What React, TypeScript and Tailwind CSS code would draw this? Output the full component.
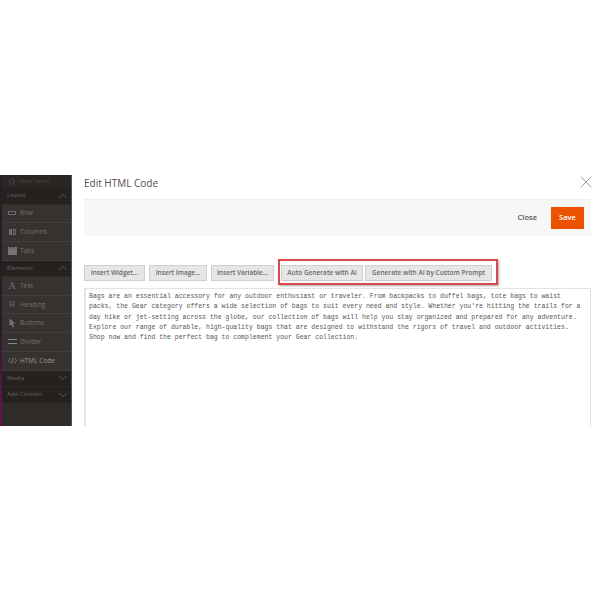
import { ChevronDown, ChevronUp, Search, X } from "lucide-react";
import type { ReactNode } from "react";

const openSans = "font-['Open_Sans','Noto_Sans',sans-serif]";

function SectionHeader({ label, open }: { label: string; open?: boolean }) {
  return (
    <div className="flex h-[16.5px] items-center justify-between border-b border-[#2e2a26] bg-[#25211e] pl-[5px] pr-px text-[6px] text-[#66625e]">
      <span>{label}</span>
      {open ? (
        <ChevronUp size={14} strokeWidth={1.3} className="text-[#6b6763]" />
      ) : (
        <ChevronDown size={14} strokeWidth={1.3} className="text-[#6b6763]" />
      )}
    </div>
  );
}

function SideItem({ icon, label, bright }: { icon: ReactNode; label: string; bright?: boolean }) {
  return (
    <div className="flex h-[18.7px] items-center border-b border-[#413e3b] bg-[#353230] pl-[5px]">
      <span className="flex w-[10px] justify-center text-[#6e6b68]">{icon}</span>
      <span className={`ml-[3px] text-[6.5px] ${bright ? "text-[#9a9794]" : "text-[#75716e]"}`}>{label}</span>
    </div>
  );
}

function ToolButton({ label, className }: { label: string; className: string }) {
  return (
    <button className={`h-[16px] rounded-none border border-[#cfcfcf] bg-[#e6e6e6] text-[6.5px] font-semibold text-[#666666] ${className}`}>
      {label}
    </button>
  );
}

export default function App() {
  return (
    <div className={`flex h-[600px] w-[600px] flex-col bg-white ${openSans}`}>
      <div className="h-[175px]" />
      <div className="flex h-[251px]">
        <div className="w-[2px] bg-gradient-to-b from-[#2a1a28] from-60% to-[#6a1050]" />
        <aside className="flex w-[70px] flex-col border-r border-[#55514e] bg-[#2e2b29]">
          <div className="flex h-[13px] items-center bg-[#2a2623] pl-[5px] text-[6px] text-[#4e4a47]">
            <span className="flex w-[10px] justify-center">
              <Search size={8} />
            </span>
            <span className="ml-[3px]">Find Items</span>
          </div>
          <SectionHeader label="Layout" open />
          <SideItem label="Row" icon={<span className="h-[4px] w-[8px] border border-[#6e6b68]" />} />
          <SideItem
            label="Columns"
            icon={
              <span className="flex h-[6px] w-[7px] gap-[1px]">
                <span className="w-[3px] bg-[#6e6b68]" />
                <span className="w-[3px] border border-[#6e6b68]" />
              </span>
            }
          />
          <SideItem
            label="Tabs"
            icon={
              <svg width="9" height="8" viewBox="0 0 9 8" fill="#75726f">
                <path d="M0 0h2v1.5h1V0h2v1.5h1V0h3v8H0z" />
              </svg>
            }
          />
          <SectionHeader label="Elements" open />
          <SideItem label="Text" icon={<span className="font-['Liberation_Serif',serif] text-[11px] leading-none">A</span>} />
          <SideItem label="Heading" icon={<span className="font-['Liberation_Serif',serif] text-[9px] leading-none">H</span>} />
          <SideItem
            label="Buttons"
            icon={
              <svg width="7" height="10" viewBox="0 0 7 10" fill="#75726f">
                <path d="M0.5 0.5 L6.5 5.5 L4 5.8 L5 9 L3.5 9.5 L2.5 6.5 L0.5 8z" />
              </svg>
            }
          />
          <SideItem
            label="Divider"
            icon={
              <span className="flex w-[9px] flex-col gap-[3px]">
                <span className="h-px bg-[#8a8784]" />
                <span className="h-px bg-[#8a8784]" />
              </span>
            }
          />
          <SideItem
            label="HTML Code"
            bright
            icon={
              <svg width="9" height="7" viewBox="0 0 9 7" fill="none" stroke="#8a8784" strokeWidth="0.8">
                <path d="M2.5 1 L0.5 3.5 L2.5 6 M6.5 1 L8.5 3.5 L6.5 6 M5.2 0.5 L3.8 6.5" />
              </svg>
            }
          />
          <SectionHeader label="Media" />
          <SectionHeader label="Add Content" />
        </aside>
        <main className="flex min-w-0 flex-1 flex-col pl-[12px] pr-[9px]">
          <div className="flex h-[24px] items-start justify-between">
            <h1 className="text-[10px] leading-[17px] text-[#514f4d]">Edit HTML Code</h1>
            <X size={20} strokeWidth={0.8} className="mr-[-5px] mt-[-3px] text-[#6b6b6b]" />
          </div>
          <div className="flex h-[37px] items-center justify-end gap-[14px] border-t border-[#eeeeee] bg-[#f7f7f7] pr-[7px]">
            <span className="text-[7.5px] font-semibold text-[#55524f]">Close</span>
            <button className="h-[22px] w-[33px] bg-[#eb5202] text-[7.5px] font-semibold text-white">Save</button>
          </div>
          <div className="mt-[29px] flex items-center">
            <ToolButton label="Insert Widget..." className="w-[61px]" />
            <ToolButton label="Insert Image..." className="ml-[4px] w-[58px]" />
            <ToolButton label="Insert Variable..." className="ml-[4px] w-[63px]" />
            <div className="relative ml-[7px] flex gap-[2px]">
              <ToolButton label="Auto Generate with AI" className="w-[82px]" />
              <ToolButton label="Generate with AI by Custom Prompt" className="w-[127px]" />
              {/* the red frame is a mark drawn over the screenshot */}
              <div className="absolute bottom-[-4px] left-[-3px] right-[-6px] top-[-6px] border-2 border-[#d9484f] shadow-[1px_1px_2px_rgba(0,0,0,0.35)]" />
            </div>
          </div>
          <div className="mt-[7px] flex-1 border border-b-0 border-l-[2px] border-[#e3e3e3] pl-[3px] pt-[3px] font-['Liberation_Mono',monospace] text-[6.5px] leading-[10.3px] text-[#555555]">
            <p className="whitespace-pre">Bags are an essential accessory for any outdoor enthusiast or traveler. From backpacks to duffel bags, tote bags to waist</p>
            <p className="whitespace-pre">packs, the Gear category offers a wide selection of bags to suit every need and style. Whether you're hitting the trails for a</p>
            <p className="whitespace-pre">day hike or jet-setting across the globe, our collection of bags will help you stay organized and prepared for any adventure.</p>
            <p className="whitespace-pre">Explore our range of durable, high-quality bags that are designed to withstand the rigors of travel and outdoor activities.</p>
            <p className="whitespace-pre">Shop now and find the perfect bag to complement your Gear collection.</p>
          </div>
        </main>
      </div>
    </div>
  );
}
